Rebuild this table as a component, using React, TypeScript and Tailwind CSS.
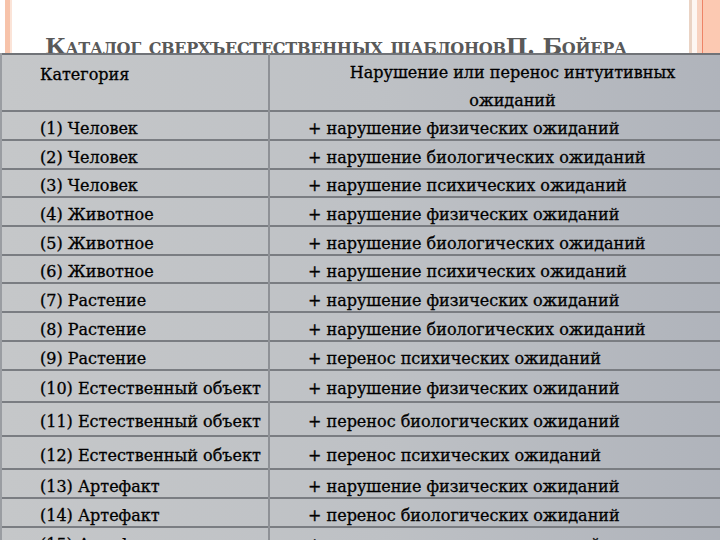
const rows: [string, string, string][] = [
  ["(1) Человек", "+ нарушение физических ожиданий", "h-[29px]"],
  ["(2) Человек", "+ нарушение биологических ожиданий", "h-[29px]"],
  ["(3) Человек", "+ нарушение психических ожиданий", "h-[28px]"],
  ["(4) Животное", "+ нарушение физических ожиданий", "h-[29px]"],
  ["(5) Животное", "+ нарушение биологических ожиданий", "h-[29px]"],
  ["(6) Животное", "+ нарушение психических ожиданий", "h-[28px]"],
  ["(7) Растение", "+ нарушение физических ожиданий", "h-[29px]"],
  ["(8) Растение", "+ нарушение биологических ожиданий", "h-[29px]"],
  ["(9) Растение", "+ перенос психических ожиданий", "h-[29px]"],
  ["(10) Естественный объект", "+ нарушение физических ожиданий", "h-[32px]"],
  ["(11) Естественный объект", "+ перенос биологических ожиданий", "h-[34px]"],
  ["(12) Естественный объект", "+ перенос психических ожиданий", "h-[33px]"],
  ["(13) Артефакт", "+ нарушение физических ожиданий", "h-[29px]"],
  ["(14) Артефакт", "+ перенос биологических ожиданий", "h-[29px]"],
  ["(15) Артефакт", "+ перенос психических ожиданий", "h-[29px]"],
];

export default function App() {
  return (
    <div className="w-[720px] h-[540px] overflow-hidden bg-white [font-family:'DejaVu_Serif',serif] text-black">
      <div className="flex h-[53px]">
        <div className="w-[5px] bg-white" />
        <div className="w-[5px] bg-[#f7c3aa]" />
        <div className="w-[2px] bg-[#fbe4d8]" />
        <div className="flex-1 flex items-end pl-[33px] overflow-hidden">
          <h1 className="text-[23px] leading-none mb-[-4px] font-bold text-[#595959] [font-variant:small-caps] tracking-[-0.3px] whitespace-nowrap">
            Каталог сверхъестественных шаблоновП. Бойера
          </h1>
        </div>
        <div className="w-[3px] bg-[#ead3c4]" />
        <div className="w-[5px] bg-[#fdf6f2]" />
        <div className="w-[5px] bg-[#f8d2c0]" />
        <div className="w-[1px] bg-[#ee8467]" />
        <div className="w-[17px] bg-[#fcc9b2]" />
      </div>
      <table className="relative w-[760px] border-collapse bg-gradient-to-r from-[#c5c7c9] via-[#bec1c5] to-[#aeb2ba] [font-family:'DejaVu_Serif',serif] text-black text-[16px] [-webkit-text-stroke:0.3px_#000]">
        <tbody>
          <tr className="h-[57px] border-t-2 border-[#707378] border-b-2 border-b-[#7a7d82]">
            <td className="w-[268px] align-top pl-[38px] pt-[6px] leading-[28px] border-l-2 border-[#9a9da2] border-r-2 border-r-[#8e9196]">
              Категория
            </td>
            <td className="align-top pl-[55px] pt-[4px] leading-[28px]">
              <div className="w-[375px] mb-[-8px] text-center">
                Нарушение или перенос интуитивных ожиданий
              </div>
            </td>
          </tr>
          {rows.map(([a, b, h]) => (
            <tr key={a} className={`${h} border-b-2 border-[#7a7d82]`}>
              <td className="pl-[38px] pt-[6px] leading-none whitespace-nowrap border-l-2 border-[#9a9da2] border-r-2 border-r-[#8e9196]">
                {a}
              </td>
              <td className="pl-[38px] pt-[6px] leading-none whitespace-nowrap">{b}</td>
            </tr>
          ))}
        </tbody>
      </table>
    </div>
  );
}
